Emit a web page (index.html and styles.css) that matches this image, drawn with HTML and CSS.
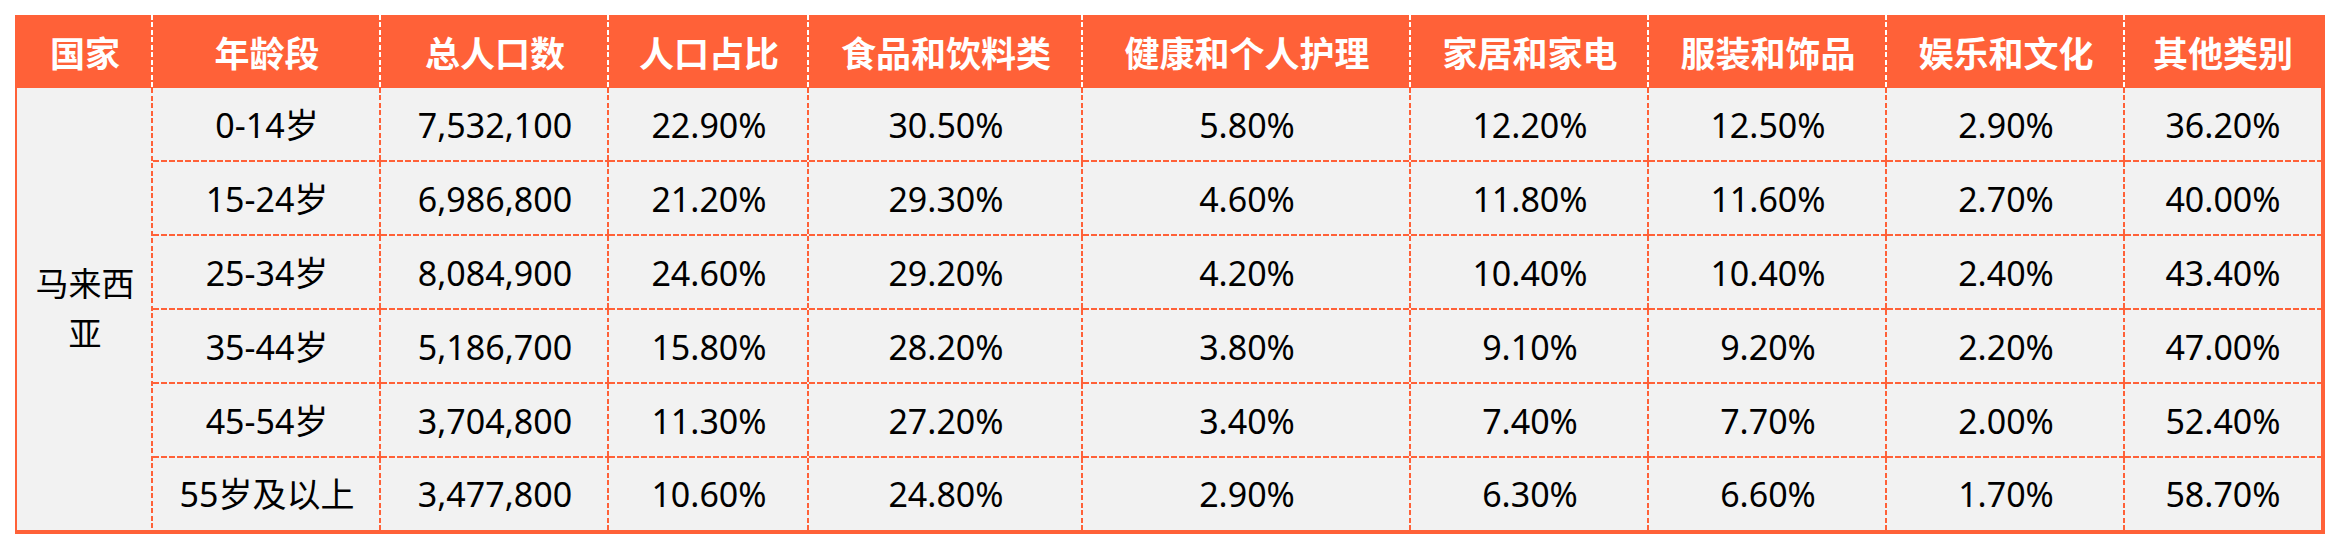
FILE: index.html
```html
<!DOCTYPE html>
<html lang="zh-CN">
<head>
<meta charset="utf-8">
<title>马来西亚人口与消费结构</title>
<link rel="stylesheet" href="styles.css">
</head>
<body>
<table class="data-table">
  <colgroup>
    <col class="c1"><col class="c2"><col class="c3"><col class="c4"><col class="c5">
    <col class="c6"><col class="c7"><col class="c8"><col class="c9"><col class="c10">
  </colgroup>
  <thead>
    <tr class="head-row">
      <th>国家</th><th>年龄段</th><th>总人口数</th><th>人口占比</th><th>食品和饮料类</th>
      <th>健康和个人护理</th><th>家居和家电</th><th>服装和饰品</th><th>娱乐和文化</th><th>其他类别</th>
    </tr>
  </thead>
  <tbody>
    <tr class="body-row">
      <td class="country" rowspan="6">马来西亚</td>
      <td>0-14岁</td><td>7,532,100</td><td>22.90%</td><td>30.50%</td><td>5.80%</td><td>12.20%</td><td>12.50%</td><td>2.90%</td><td>36.20%</td>
    </tr>
    <tr class="body-row">
      <td>15-24岁</td><td>6,986,800</td><td>21.20%</td><td>29.30%</td><td>4.60%</td><td>11.80%</td><td>11.60%</td><td>2.70%</td><td>40.00%</td>
    </tr>
    <tr class="body-row">
      <td>25-34岁</td><td>8,084,900</td><td>24.60%</td><td>29.20%</td><td>4.20%</td><td>10.40%</td><td>10.40%</td><td>2.40%</td><td>43.40%</td>
    </tr>
    <tr class="body-row">
      <td>35-44岁</td><td>5,186,700</td><td>15.80%</td><td>28.20%</td><td>3.80%</td><td>9.10%</td><td>9.20%</td><td>2.20%</td><td>47.00%</td>
    </tr>
    <tr class="body-row">
      <td>45-54岁</td><td>3,704,800</td><td>11.30%</td><td>27.20%</td><td>3.40%</td><td>7.40%</td><td>7.70%</td><td>2.00%</td><td>52.40%</td>
    </tr>
    <tr class="body-row last-row">
      <td>55岁及以上</td><td>3,477,800</td><td>10.60%</td><td>24.80%</td><td>2.90%</td><td>6.30%</td><td>6.60%</td><td>1.70%</td><td>58.70%</td>
    </tr>
  </tbody>
</table>
</body>
</html>
```
FILE: styles.css
```css
html, body {
  margin: 0;
  padding: 0;
  background: #ffffff;
}

body {
  padding: 15px;
  font-family: "Noto Sans", "Noto Sans CJK SC", sans-serif;
  color: #000000;
}

.data-table {
  --accent: #ff6138;
  --dash-h: repeating-linear-gradient(to right, var(--accent) 0 6px, transparent 6px 8px);
  --dash-v: repeating-linear-gradient(to bottom, var(--accent) 0 5px, transparent 5px 7.5px);
  --dash-v-white: repeating-linear-gradient(to bottom, #ffffff 0 5px, transparent 5px 7.5px);
  border-collapse: separate;
  border-spacing: 0;
  table-layout: fixed;
  width: 2310px;
  border-style: solid;
  border-color: var(--accent);
  border-width: 0 4px 4px 2px;
  background: #f2f2f2;
}

.c1 { width: 136px; }
.c2 { width: 228px; }
.c3 { width: 228px; }
.c4 { width: 200px; }
.c5 { width: 274px; }
.c6 { width: 328px; }
.c7 { width: 238px; }
.c8 { width: 238px; }
.c9 { width: 238px; }
.c10 { width: 196px; }

.head-row {
  height: 73px;
}

.head-row th {
  background-color: var(--accent);
  background-image: var(--dash-v-white);
  background-repeat: no-repeat;
  background-position: right top;
  background-size: 2px 100%;
  color: #ffffff;
  font-family: "Noto Sans CJK SC", "Noto Sans", sans-serif;
  font-weight: 700;
  font-size: 35px;
  line-height: 1.2;
  padding: 0 6px;
  text-align: center;
  vertical-align: middle;
  white-space: nowrap;
}

.head-row th:last-child {
  background-image: none;
}

.body-row {
  height: 74px;
}

.body-row.last-row {
  height: 72px;
}

.body-row td {
  background-image: var(--dash-v), var(--dash-h);
  background-repeat: no-repeat, no-repeat;
  background-position: right top, left bottom;
  background-size: 2px 100%, 100% 2px;
  font-size: 34px;
  line-height: 1.2;
  padding: 0 10px;
  text-align: center;
  vertical-align: middle;
  white-space: nowrap;
}

.body-row td:last-child {
  background-image: var(--dash-h);
  background-position: left bottom;
  background-size: 100% 2px;
}

.body-row.last-row td {
  background-image: var(--dash-v);
  background-position: right top;
  background-size: 2px 100%;
}

.body-row.last-row td:last-child {
  background-image: none;
}

.body-row td.country {
  background-image: var(--dash-v);
  background-position: right top;
  background-size: 2px 100%;
  white-space: normal;
  line-height: 50px;
  font-size: 33px;
  padding: 0 14px;
}
```
